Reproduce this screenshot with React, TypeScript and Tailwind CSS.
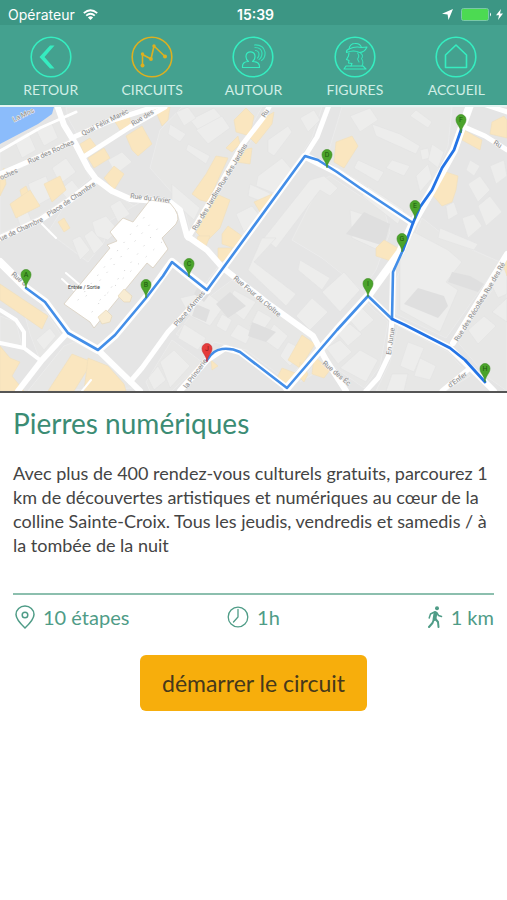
import type { ReactNode } from 'react';

type Pin = { letter: string; x: number; y: number; end?: boolean };
type Label = { text: string; x: number; y: number; angle: number };
type Road = { d: string; w: number };

const blocks: string[] = [
  '0,150 60,118 66,128 72,138 36,157 0,172',
  '76,138 108,123 156,108 168,107 122,130 86,152 80,148',
  '0,178 72,143 90,178 66,199 36,218 0,234',
  '66,107 140,107 108,119 77,134 68,118',
  '108,222 150,196 134,206 118,196 98,184 62,210 48,232 88,262 104,242',
  '182,107 262,107 238,150 190,230 184,206 150,168 160,130',
  '272,107 322,107 312,138 299,158 205,284 222,262 194,238 240,158',
  '342,107 452,107 448,146 430,186 410,216 366,186 326,160',
  '322,180 330,176 345,186 385,212 390,232 376,270 362,290 322,258 292,240',
  '404,262 422,218 450,240 500,262 446,338 396,314 396,280',
  '232,280 300,330 320,346 286,380 246,350 214,342 206,352 176,334 200,304',
  '374,310 388,322 380,366 364,388 330,364 300,382 366,302',
  '398,326 448,352 470,376 446,391 376,391 390,362',
  '0,316 16,322 22,346 0,341',
  '30,334 24,312 46,312 62,336 40,360',
  '74,342 98,354 134,388 28,391 64,346',
  '146,382 172,340 202,362 172,391 150,391',
  '456,340 507,270 507,391 486,376',
];

const lightBuildings: string[] = [
  '14,140 28,132 36,150 22,158', '36,130 52,124 58,138 44,146',
  '52,168 66,158 76,172 60,184', '28,184 46,176 54,196 36,206',
  '14,206 24,202 32,222 20,226', '60,190 72,180 80,190 68,200',
  '108,160 122,152 132,162 116,174', '92,222 106,216 118,230 108,240 96,236',
  '84,236 92,230 104,244 94,254', '72,240 80,236 90,250 80,260', '110,206 120,200 130,214 118,222',
  '190,120 214,108 226,122 206,140', '176,112 188,107 196,118 184,126', '188,144 210,156 206,164 186,150',
  '196,130 222,116 230,128 208,144', '172,184 200,208 194,220 172,200', '170,124 186,134 180,142 168,134',
  '268,140 288,126 292,132 274,156 268,152', '258,176 282,158 294,172 276,194 256,186',
  '250,184 276,196 268,204 248,196', '236,214 252,206 260,216 244,232', '300,118 314,110 320,120 308,132',
  '350,116 370,108 378,120 360,132', '372,124 400,134 420,146 416,154 376,136',
  '416,110 432,122 428,128 410,116', '420,150 428,148 430,158 422,160', '432,144 444,152 438,168 428,160',
  '392,160 410,166 404,176 386,168', '358,160 384,172 378,182 354,168', '416,176 428,164 432,178 420,192',
  '350,210 374,218 388,232 378,250 352,238', '368,186 404,210 398,224 362,196',
  '468,184 480,176 490,190 478,202', '490,166 504,160 507,176 496,184', '470,160 480,166 474,176 466,170',
  '478,206 490,196 502,212 486,226', '462,218 474,214 482,226 468,238',
  '446,206 454,202 458,214 448,220', '440,228 478,244 474,250 438,238',
  '310,180 324,176 338,188 330,196 320,190 276,248 264,238',
  '262,238 276,238 254,262 296,294 286,306 248,270', '296,316 312,298 328,312 310,330',
  '322,292 344,272 360,290 340,312', '300,260 330,278 322,290 298,270',
  '234,290 256,302 244,320 226,306', '258,310 272,318 262,332 250,326', '238,324 252,332 246,344 230,336',
  '274,324 288,336 278,350 264,340', '222,314 232,320 226,332 216,326', '288,342 304,350 290,366 280,356',
  '180,298 206,292 224,306 210,326 190,316', '184,324 206,338 198,350 178,338',
  '348,318 362,308 374,320 360,332', '336,332 350,324 362,334 348,346', '326,348 340,340 352,352 338,364',
  '340,368 360,350 378,360 366,382', '400,254 414,232 448,250 462,262 446,282 458,290 440,332 400,310',
  '408,342 424,348 414,372 400,366', '392,374 408,374 404,391 386,391', '420,358 436,366 430,380 414,376',
  '468,330 484,316 496,326 478,344', '490,282 507,266 507,294 498,298', '492,312 507,298 507,322',
  '36,340 50,328 56,336 44,350', '160,362 174,350 190,366 170,388', '148,378 158,366 166,380 154,390',
];

const darkBuildings: string[] = [
  '418,288 444,296 448,306 438,318 404,304', '452,272 470,276 484,284 478,292 448,282',
  '196,304 210,310 206,322 192,316', '198,286 210,294 204,302 194,294', '252,322 276,332 266,342 248,336',
  '216,304 230,292 246,306 228,318', '364,212 390,224 384,246 346,234',
];

const tanBuildings: string[] = [
  '0,176 4,168 6,184 0,196', '20,190 26,186 30,196 22,198', '10,204 30,190 40,206 16,218',
  '44,184 60,176 66,190 52,202', '58,222 64,218 70,228 64,232', '80,144 90,138 96,146 84,154',
  '88,158 104,148 110,158 94,168', '114,120 128,112 132,126 120,130', '104,178 114,166 124,174 114,190',
  '126,136 142,126 152,144 138,156 132,150', '154,107 170,107 168,120 162,126',
  '234,120 246,108 254,116 250,136 236,132', '264,118 274,112 272,124 256,144 248,136',
  '226,148 238,136 240,144 232,152', '242,150 252,148 250,164 236,162',
  '216,156 228,158 208,202 200,200 192,194 206,174', '212,192 230,200 220,228 206,242 196,232',
  '198,236 210,236 206,246 196,244', '222,234 228,226 242,236 234,248 222,244',
  '254,202 272,194 270,204 260,212', '218,248 232,248 228,260 218,262',
  '336,142 352,136 358,146 344,168 334,162', '446,172 458,176 456,190 452,202 442,206 430,192',
  '464,130 482,140 480,150 462,140', '492,122 504,116 507,120 507,138 490,134',
  '376,248 384,240 398,248 394,262 376,256', '0,284 48,316 42,329 0,300', '0,346 10,358 20,362 12,376 24,391 0,391',
  '72,354 92,362 74,391 48,391', '88,358 108,366 124,384 126,391 84,391',
  '302,335 315,344 300,368 288,360', '282,368 298,374 290,386 276,380', '300,362 308,374 304,382 298,376',
  '314,356 330,370 324,378 312,374', '211,360 218,366 212,370', '502,262 507,256 507,276',
];

const roads: Road[] = [
  { d: 'M0 151L40 128L76 112', w: 3 },
  { d: 'M57 105L64 125L75 143L88 168L96 179L112 191L130 199L170 202L180 210L187 236L207 250L223 268L270 305L313 336L326 360L346 391', w: 6 },
  { d: 'M74 137L110 121L160 105', w: 5 },
  { d: 'M0 174L32 160L74 141', w: 5 },
  { d: 'M85 156L130 127L165 107', w: 5 },
  { d: 'M96 180L70 200L40 220L0 238', w: 6 },
  { d: 'M188 238L220 185L242 145L263 118L270 105', w: 5 },
  { d: 'M329 105L317 137L305 156', w: 5 },
  { d: 'M470 105L461 130L454 150L432 190L413 223L400 252L368 296L337 330L287 388', w: 8 },
  { d: 'M462 126L485 136L507 150M486 105L507 112', w: 5 },
  { d: 'M207 290L305 156L337 172L413 223', w: 7 },
  { d: 'M0 262L26 288L45 302L68 333L98 350L115 335L146 298L172 262L188 275L207 290', w: 8 },
  { d: 'M207 290L168 332L142 368L130 382', w: 5 },
  { d: 'M98 350L140 391', w: 6 },
  { d: 'M66 334L42 360L18 391', w: 6 },
  { d: 'M0 310L16 320L24 332L24 348L40 360M0 343L24 348', w: 4 },
  { d: 'M392 319L389 355L378 378L366 391', w: 5 },
  { d: 'M393 272L392 319L450 348L485 382L494 391', w: 6 },
  { d: 'M392 319L368 296M287 388L240 352L225 348L207 360L180 391', w: 6 },
  { d: 'M453 343L507 254', w: 6 },
  { d: 'M470 368L442 391', w: 5 },
  { d: 'M42 224L56 238M66 273L80 285M62 279L74 290M82 391L91 380', w: 2 },
];

const routes: string[] = [
  'M26 288L45 302L68 333L98 350L115 335L146 298L163 276L172 262L188 275L207 290L305 156L318 160L337 172L360 188L413 223',
  'M403 250L393 272L392 319L368 296L337 330L287 388L240 352Q232 348 222 349Q213 350 207 360',
];
const darkRoutes: string[] = [
  'M461 130L454 150L442 168L432 190L420 207L413 223L403 250',
  'M392 319L405 325L450 348L465 360L485 382',
];

const labels: Label[] = [
  { text: 'La Mos', x: 14, y: 122, angle: -26 },
  { text: 'Rue des Roches', x: 29, y: 164, angle: -24 },
  { text: 'oches', x: 1, y: 180, angle: -24 },
  { text: 'Quai Félix Maréc', x: 83, y: 136, angle: -27 },
  { text: 'Rue des', x: 133, y: 126, angle: -31 },
  { text: 'Place de Chambre', x: 49, y: 217, angle: -34 },
  { text: 'ue de Chambre', x: 1, y: 241, angle: -25 },
  { text: 'Rue du Vivier', x: 130, y: 198, angle: 7 },
  { text: 'Rue des Jardins', x: 196, y: 231, angle: -59 },
  { text: 'Rue des Jardins', x: 222, y: 188, angle: -59 },
  { text: 'Ru', x: 265, y: 118, angle: -58 },
  { text: 'Rue d', x: 11, y: 275, angle: 40 },
  { text: 'Rue Four du Cloître', x: 233, y: 279, angle: 40 },
  { text: "Place d'Armes", x: 177, y: 327, angle: -50 },
  { text: 'la Princerie', x: 187, y: 389, angle: -54 },
  { text: 'Rue des Éc', x: 322, y: 364, angle: 40 },
  { text: 'En Jurue', x: 391, y: 355, angle: -82 },
  { text: 'Rue des Récollets', x: 458, y: 342, angle: -58 },
  { text: 'Rue des Ré', x: 488, y: 294, angle: -60 },
  { text: "d'Enfer", x: 450, y: 388, angle: -36 },
  { text: 'Ru', x: 493, y: 144, angle: 30 },
];

const pins: Pin[] = [
  { letter: 'A', x: 26, y: 288 },
  { letter: 'B', x: 146, y: 298 },
  { letter: 'C', x: 189, y: 277 },
  { letter: 'D', x: 327, y: 168 },
  { letter: 'E', x: 415, y: 219 },
  { letter: 'F', x: 461, y: 133 },
  { letter: 'G', x: 402, y: 252 },
  { letter: 'H', x: 485, y: 382 },
  { letter: 'I', x: 368, y: 297 },
  { letter: 'J', x: 207, y: 362, end: true },
];

function CityMap() {
  return (
    <svg viewBox="0 107 507 284" className="block w-full" role="img" aria-label="Plan du circuit">
      <rect x="0" y="107" width="507" height="284" fill="#e5e5e5" />
      {blocks.map((p) => <polygon key={p} points={p} fill="#e7e7e6" stroke="#ebebeb" />)}
      {lightBuildings.map((p) => <polygon key={p} points={p} fill="#ededec" stroke="#e2e2e2" strokeWidth="0.6" />)}
      {darkBuildings.map((p) => <polygon key={p} points={p} fill="#dfdfdf" />)}
      {tanBuildings.map((p) => <polygon key={p} points={p} fill="#fae6bf" stroke="#f0dfbc" strokeWidth="0.6" />)}
      {roads.map((r) => (
        <path key={r.d} d={r.d} fill="none" stroke="#ffffff" strokeWidth={r.w} strokeLinejoin="round" strokeLinecap="round" />
      ))}
      <path d="M0 107H54L52 114L38 124L0 144Z" fill="#8bbcfb" />
      <path
        d="M64 304L110 248L107 245L117 241L110 232L123 218L133 222L150 200L170 203Q182 216 176 224L162 238L168 249L153 268L147 263L94 328L90 322Z"
        fill="#ffffff" stroke="#d9cfbf" strokeWidth="0.8"
      />
      <path d="M98 317L106 310L112 316L110 322L102 324ZM118 296L124 289L132 296L130 302L124 302Z" fill="#f8ecd2" stroke="#e4d5b6" strokeWidth="0.6" />
      <path
        d="M78 300L150 210M92 312L158 228M86 296L152 222M100 300L164 240"
        stroke="#d8d8d8" strokeWidth="1" strokeLinecap="round" strokeDasharray="0.5 10"
      />
      {labels.map((l) => (
        <text
          key={`${l.text}${l.x}`}
          transform={`translate(${l.x} ${l.y}) rotate(${l.angle})`}
          className="font-['Roboto',sans-serif] text-[7px]"
          fill="#8b8b8b" stroke="#f3f3f3" strokeWidth="1" paintOrder="stroke"
        >
          {l.text}
        </text>
      ))}
      <text x="68" y="289" className="font-['Roboto',sans-serif] text-[5px]" fill="#3c3c3c">Entrée / Sortie</text>
      {routes.map((d) => <path key={d} d={d} fill="none" stroke="#438ee8" strokeWidth="2.6" strokeLinejoin="round" strokeLinecap="round" />)}
      {darkRoutes.map((d) => <path key={d} d={d} fill="none" stroke="#2474e6" strokeWidth="2.8" strokeLinejoin="round" strokeLinecap="round" />)}
      {pins.map((p) => (
        <g key={p.letter} transform={`translate(${p.x} ${p.y})`}>
          <path
            d="M0 0C-0.6 -7 -5 -8.500 -5 -13.500A5 5 0 0 1 5 -13.500C5 -8.500 0.600 -7 0 0Z"
            fill={p.end ? '#e53b3b' : '#4ba32b'} stroke={p.end ? '#c42f30' : '#3c8b21'} strokeWidth="0.6"
          />
          <text x="0" y="-11" textAnchor="middle" className="font-['Roboto',sans-serif] text-[7px]" fill={p.end ? '#8e1919' : '#1f5911'}>
            {p.letter}
          </text>
        </g>
      ))}
    </svg>
  );
}

function Ring({ children }: { children: ReactNode }) {
  return (
    <svg viewBox="0 0 42 42" className="size-[42px]" fill="none" stroke="currentColor" strokeLinecap="round" strokeLinejoin="round" aria-hidden="true">
      <circle cx="21" cy="21" r="19.8" strokeWidth="1.600" />
      {children}
    </svg>
  );
}

const navItems: { label: string; active?: boolean; icon: ReactNode }[] = [
  {
    label: 'RETOUR',
    icon: <path d="M20 9.500L9.500 21L20 32.500H24.500L14.500 21L24.500 9.500Z" fill="currentColor" stroke="none" />,
  },
  {
    label: 'CIRCUITS',
    active: true,
    icon: (
      <>
        <path d="M11.500 29.500V18.500L20 23L23 10L34 20.500" strokeWidth="1.600" />
        <g fill="currentColor" stroke="none">
          <circle cx="11.500" cy="29.500" r="2" />
          <circle cx="11.500" cy="18" r="1.700" />
          <circle cx="20" cy="23" r="1.900" />
          <circle cx="23" cy="10" r="1.700" />
          <circle cx="34" cy="20.500" r="2" />
        </g>
      </>
    ),
  },
  {
    label: 'AUTOUR',
    icon: (
      <g strokeWidth="1.200">
        <path d="M16.500 25.500C14.200 24 13.800 21 14.200 19C15.200 14.800 21.800 14.800 22.800 19C23.200 21 22.800 24 20.500 25.500Q28 25.500 27.500 31.500H10.500Q10 25.500 16.500 25.500Z" />
        <path d="M23.500 14.500Q27 15 27 18.500Q27 20.500 25.500 22" strokeOpacity="0.800" />
        <path d="M23 11.500Q29.500 11.500 30 17Q30 21.500 27 23.500" strokeOpacity="0.800" />
        <path d="M22.500 9Q31.500 8.500 33 16Q33.500 21.500 29.500 24.500" strokeOpacity="0.800" />
      </g>
    ),
  },
  {
    label: 'FIGURES',
    icon: (
      <g strokeWidth="1.100">
        <path d="M15 13Q16 7.500 21 7.500Q26 7 27.500 11.500L33 11Q30.500 16.500 25.500 16.500Q20 13.500 12.500 16.500Q12 14 15 13Z" />
        <path d="M15 13Q21 10 27.500 11.500M15 17L14.500 20L12.500 23.500L15 24.500L14.500 27L18 27.500L17 30" />
        <path d="M26.500 17Q30 19.500 27.500 22.500Q30 26 28 30M23.500 17Q26 20 23.500 23L25 26" strokeOpacity="0.800" />
        <path d="M12 30H29L32 33H10Z" />
      </g>
    ),
  },
  {
    label: 'ACCUEIL',
    icon: <path d="M10.500 19L21 9L31.500 19V31.500H10.500Z" strokeWidth="1.600" />,
  },
];

function StatusBar() {
  return (
    <div className="grid h-[25px] grid-cols-3 items-center bg-[#3c9684] pt-1 pr-1 pl-2 font-['Inter','Liberation_Sans',sans-serif] text-[14px] leading-5 text-white">
      <div className="flex items-center gap-2">
        <span>Opérateur</span>
        <svg viewBox="0 0 15 11" className="h-[11px] w-[15px]" fill="none" stroke="currentColor" strokeWidth="1.800" aria-hidden="true">
          <path d="M0.800 4.200Q7.500 -1.800 14.200 4.200M3.200 6.700Q7.500 2.800 11.800 6.700" />
          <path d="M7.500 11L4.900 8.400Q7.500 6.300 10.100 8.400Z" fill="currentColor" stroke="none" />
        </svg>
      </div>
      <span className="text-center font-semibold">15:39</span>
      <div className="flex items-center justify-end gap-1">
        <svg viewBox="0 0 11 11" className="mr-1 size-[11px]" fill="currentColor" aria-hidden="true">
          <path d="M11 0L6.500 11L5.600 5.600L0 4.800Z" />
        </svg>
        <svg viewBox="0 0 31 13" className="h-[13px] w-[31px]" aria-hidden="true">
          <rect x="0.500" y="0.500" width="27" height="12" rx="2" fill="#4cda52" stroke="#79c9a8" />
          <path d="M29 4.500Q31 6.500 29 8.500Z" fill="#ffffff" />
        </svg>
        <svg viewBox="0 0 7 11" className="h-[11px] w-[7px]" fill="currentColor" aria-hidden="true">
          <path d="M5 0L0 6.200H3L2 11L7 4.600H4Z" />
        </svg>
      </div>
    </div>
  );
}

export default function App() {
  return (
    <div className="min-h-screen bg-white font-['Lato','Open_Sans',sans-serif] text-[#444444]">
      <header>
        <StatusBar />
        <nav className="grid h-20 grid-cols-5 border-b border-[#3f9f8c] bg-[#44a18f]" aria-label="Navigation principale">
          {navItems.map((item) => (
            <button key={item.label} type="button" className="flex cursor-pointer flex-col items-center gap-1 pt-[11px]">
              <span className={item.active ? 'text-[#ddb020]' : 'text-[#35edc0]'}>
                <Ring>{item.icon}</Ring>
              </span>
              <span className="text-[14px] leading-4 text-[#d0eee6]">{item.label}</span>
            </button>
          ))}
        </nav>
      </header>
      <main>
        <div className="border-t-2 border-b-2 border-t-[#e4f5f2] border-b-[#555555]">
          <CityMap />
        </div>
        <div className="px-[13px] pt-3">
          <h1 className="text-[28px] leading-9 text-[#3b8c74]">Pierres numériques</h1>
          <p className="mt-5 text-[18px] leading-6">
            Avec plus de 400 rendez-vous culturels gratuits, parcourez 1 km de découvertes artistiques et numériques au cœur de la colline Sainte-Croix. Tous les jeudis, vendredis et samedis / à la tombée de la nuit
          </p>
          <ul className="mt-9 grid grid-cols-3 border-t-2 border-[#8cbfae] pt-2 text-[20px] leading-7 text-[#4f9c87]">
            <li className="flex items-center gap-2 pl-[2px]">
              <svg viewBox="0 0 20 24" className="h-6 w-5" fill="none" stroke="currentColor" strokeWidth="1.500" aria-hidden="true">
                <path d="M10 23Q1 14.500 1 9.500A9 8.500 0 0 1 19 9.500Q19 14.500 10 23Z" />
                <circle cx="10" cy="10" r="2.800" />
              </svg>
              10 étapes
            </li>
            <li className="flex items-center justify-center gap-2">
              <svg viewBox="0 0 22 22" className="size-[22px]" fill="none" stroke="currentColor" strokeWidth="1.300" strokeLinecap="round" aria-hidden="true">
                <circle cx="11" cy="11" r="9.800" />
                <path d="M11 3.500V11L6.500 16" />
              </svg>
              1h
            </li>
            <li className="flex items-center justify-end gap-2">
              <svg viewBox="0 0 16 22" className="h-[22px] w-4" fill="none" stroke="currentColor" strokeLinecap="round" strokeLinejoin="round" aria-hidden="true">
                <circle cx="10" cy="2.300" r="2" fill="currentColor" stroke="none" />
                <path d="M8.500 7L7.500 13" strokeWidth="3.800" />
                <path d="M7.500 6L3.500 8L2.200 12M10 7L11.500 9.500L14.500 10.500" strokeWidth="1.500" />
                <path d="M7 13L5.500 17L2 21M8.500 13L11 16L11.500 21" strokeWidth="2" />
              </svg>
              1 km
            </li>
          </ul>
          <div className="mt-6 flex justify-center">
            <button type="button" className="h-14 w-[227px] cursor-pointer rounded-md bg-[#f7ae0c] text-[23px] leading-7 text-[#46391b]">
              démarrer le circuit
            </button>
          </div>
        </div>
      </main>
    </div>
  );
}
